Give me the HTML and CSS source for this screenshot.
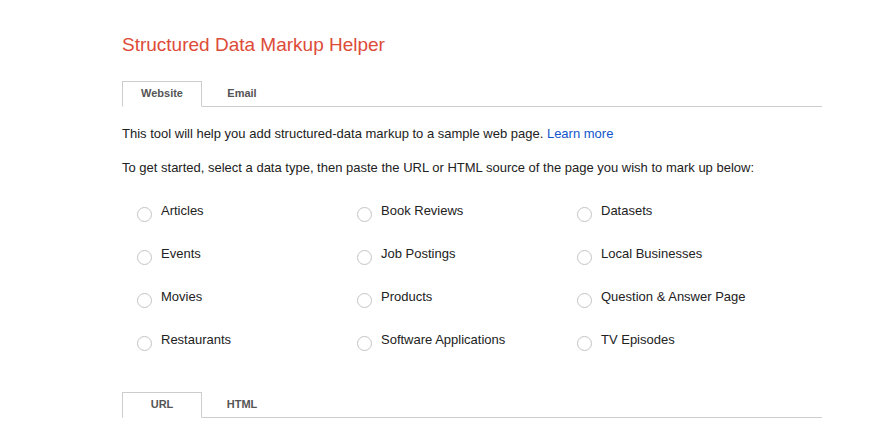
FILE: index.html
```html
<!DOCTYPE html>
<html lang="en">
<head>
<meta charset="utf-8">
<title>Structured Data Markup Helper</title>
<link rel="stylesheet" href="styles.css">
</head>
<body>
<main class="page">
  <h1 class="title">Structured Data Markup Helper</h1>
  <div class="tabs">
    <div class="tab active">Website</div>
    <div class="tab">Email</div>
  </div>
  <p class="text">This tool will help you add structured-data markup to a sample web page. <a class="link" href="#">Learn more</a></p>
  <p class="text text-second">To get started, select a data type, then paste the URL or HTML source of the page you wish to mark up below:</p>
  <div class="types">
    <label class="type"><span class="radio"></span><span class="label">Articles</span></label>
    <label class="type"><span class="radio"></span><span class="label">Book Reviews</span></label>
    <label class="type"><span class="radio"></span><span class="label">Datasets</span></label>
    <label class="type"><span class="radio"></span><span class="label">Events</span></label>
    <label class="type"><span class="radio"></span><span class="label">Job Postings</span></label>
    <label class="type"><span class="radio"></span><span class="label">Local Businesses</span></label>
    <label class="type"><span class="radio"></span><span class="label">Movies</span></label>
    <label class="type"><span class="radio"></span><span class="label">Products</span></label>
    <label class="type"><span class="radio"></span><span class="label">Question &amp; Answer Page</span></label>
    <label class="type"><span class="radio"></span><span class="label">Restaurants</span></label>
    <label class="type"><span class="radio"></span><span class="label">Software Applications</span></label>
    <label class="type"><span class="radio"></span><span class="label">TV Episodes</span></label>
  </div>
  <div class="tabs tabs-source">
    <div class="tab active">URL</div>
    <div class="tab">HTML</div>
  </div>
</main>
</body>
</html>
```
FILE: styles.css
```css
html, body {
  margin: 0;
  padding: 0;
  background: #fff;
}
body {
  font-family: "Liberation Sans", Arial, sans-serif;
  color: #222;
  overflow: hidden;
}
.page {
  margin-left: 122px;
  width: 700px;
}
.title {
  margin: 34px 0 0;
  font-size: 19px;
  line-height: 22px;
  font-weight: normal;
  color: #dd4b39;
}
.tabs {
  display: flex;
  margin-top: 25px;
  border-bottom: 1px solid #ccc;
}
.tab {
  box-sizing: border-box;
  width: 80px;
  height: 26px;
  margin-bottom: -1px;
  border: 1px solid transparent;
  border-bottom: 1px solid transparent;
  font-size: 11px;
  font-weight: bold;
  line-height: 23px;
  text-align: center;
  color: #555;
}
.tab.active {
  border-color: #ccc;
  border-bottom-color: #fff;
  background: #fff;
}
.text {
  margin: 19px 0 0;
  font-size: 13px;
  line-height: 16px;
}
.text-second {
  margin-top: 18px;
}
.link {
  color: #1155cc;
  text-decoration: none;
}
.types {
  display: grid;
  grid-template-columns: 220px 220px 220px;
  row-gap: 23px;
  margin-top: 25px;
  padding-left: 15px;
}
.type {
  display: flex;
  align-items: flex-start;
  height: 20px;
  font-size: 13px;
  line-height: 20px;
}
.radio {
  box-sizing: border-box;
  width: 15px;
  height: 15px;
  margin-top: 6px;
  margin-right: 9px;
  border: 1px solid #c4c4c4;
  border-radius: 50%;
  flex: none;
}
.tabs-source {
  margin-top: 42px;
}
```
